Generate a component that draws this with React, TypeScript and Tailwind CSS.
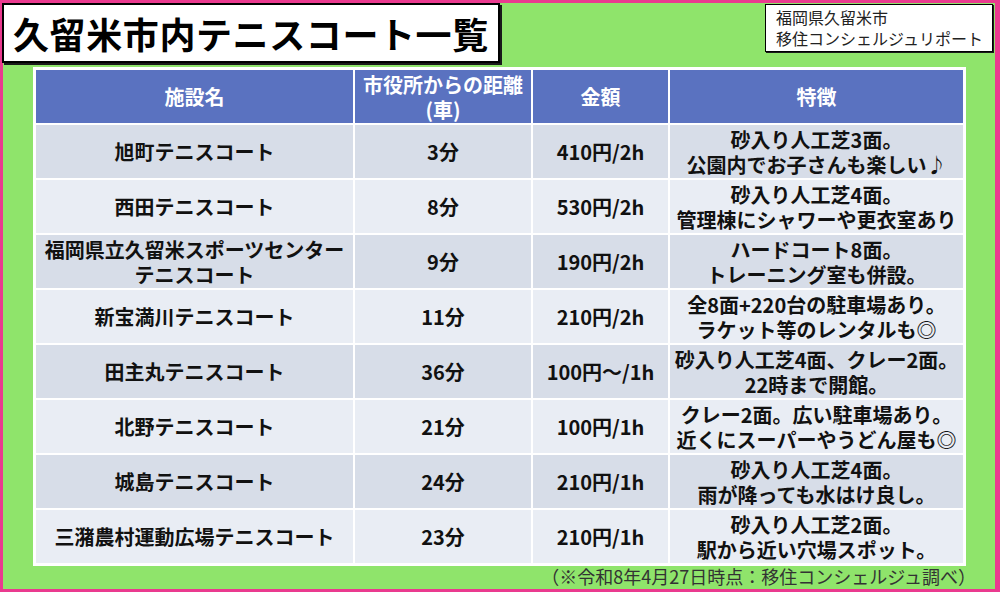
const rows = [
  { name: ["旭町テニスコート"], time: "3分", price: "410円/2h", note: ["砂入り人工芝3面。", "公園内でお子さんも楽しい♪"] },
  { name: ["西田テニスコート"], time: "8分", price: "530円/2h", note: ["砂入り人工芝4面。", "管理棟にシャワーや更衣室あり"] },
  { name: ["福岡県立久留米スポーツセンター", "テニスコート"], time: "9分", price: "190円/2h", note: ["ハードコート8面。", "トレーニング室も併設。"] },
  { name: ["新宝満川テニスコート"], time: "11分", price: "210円/2h", note: ["全8面+220台の駐車場あり。", "ラケット等のレンタルも◎"] },
  { name: ["田主丸テニスコート"], time: "36分", price: "100円～/1h", note: ["砂入り人工芝4面、クレー2面。", "22時まで開館。"] },
  { name: ["北野テニスコート"], time: "21分", price: "100円/1h", note: ["クレー2面。広い駐車場あり。", "近くにスーパーやうどん屋も◎"] },
  { name: ["城島テニスコート"], time: "24分", price: "210円/1h", note: ["砂入り人工芝4面。", "雨が降っても水はけ良し。"] },
  { name: ["三潴農村運動広場テニスコート"], time: "23分", price: "210円/1h", note: ["砂入り人工芝2面。", "駅から近い穴場スポット。"] },
];

function Lines({ lines }: { lines: string[] }) {
  return (
    <>
      {lines.map((l) => (
        <span key={l} className="block whitespace-nowrap">
          {l}
        </span>
      ))}
    </>
  );
}

export default function App() {
  const font = { fontFamily: '"Noto Sans CJK JP", "Noto Sans", sans-serif' };
  return (
    <div
      className="w-[1000px] h-[592px] bg-[#ea3a8f] pt-[3px] pl-[3px] pr-[5px] pb-[3px]"
      style={font}
    >
      <div className="w-full h-full bg-[#8fe46b] flex flex-col">
        {/* top bar */}
        <div className="flex justify-between items-start h-[60px]">
          <div className="-ml-[1px] h-[60px] w-[498px] bg-white border-2 border-black shadow-[2px_2px_0_#1a1a1a] flex items-center pl-[9px]">
            <h1 className="text-[36px] font-bold text-black leading-none tracking-[0.6px]">
              久留米市内テニスコート一覧
            </h1>
          </div>
          <div className="mt-[1px] mr-[2px] w-[228px] h-[48px] bg-white border border-black shadow-[1px_1px_0_#1a1a1a] pl-[10px] pt-[2px] text-[16px] leading-[21px] text-[#222]">
            <div>福岡県久留米市</div>
            <div>移住コンシェルジュリポート</div>
          </div>
        </div>

        {/* table */}
        <div className="ml-[30px] mt-[4px] w-[933px] bg-white p-[3px] grid grid-cols-[317px_176px_135px_293px] auto-rows-[53px] gap-[2px] text-[20px] leading-[25px] font-bold">
          {["施設名", "市役所からの距離\n(車)", "金額", "特徴"].map((h) => (
            <div key={h} className="bg-[#5a72c0] text-white flex flex-col items-center justify-center text-center">
              <Lines lines={h.split("\n")} />
            </div>
          ))}
          {rows.map((r, i) => {
            const bg = i % 2 === 0 ? "bg-[#d7dde8]" : "bg-[#e9edf4]";
            return (
              <div key={r.name[0]} className="contents">
                <div className={`${bg} text-[#111] flex flex-col items-center justify-center text-center`}>
                  <Lines lines={r.name} />
                </div>
                <div className={`${bg} text-[#111] flex items-center justify-center`}>{r.time}</div>
                <div className={`${bg} text-[#111] flex items-center justify-center`}>{r.price}</div>
                <div className={`${bg} text-[#111] flex flex-col items-center justify-center text-center`}>
                  <Lines lines={r.note} />
                </div>
              </div>
            );
          })}
        </div>

        {/* footnote */}
        <div className="w-[973px] text-right text-[18px] leading-[20px] text-[#333]">
          （※令和8年4月27日時点：移住コンシェルジュ調べ）
        </div>
      </div>
    </div>
  );
}
